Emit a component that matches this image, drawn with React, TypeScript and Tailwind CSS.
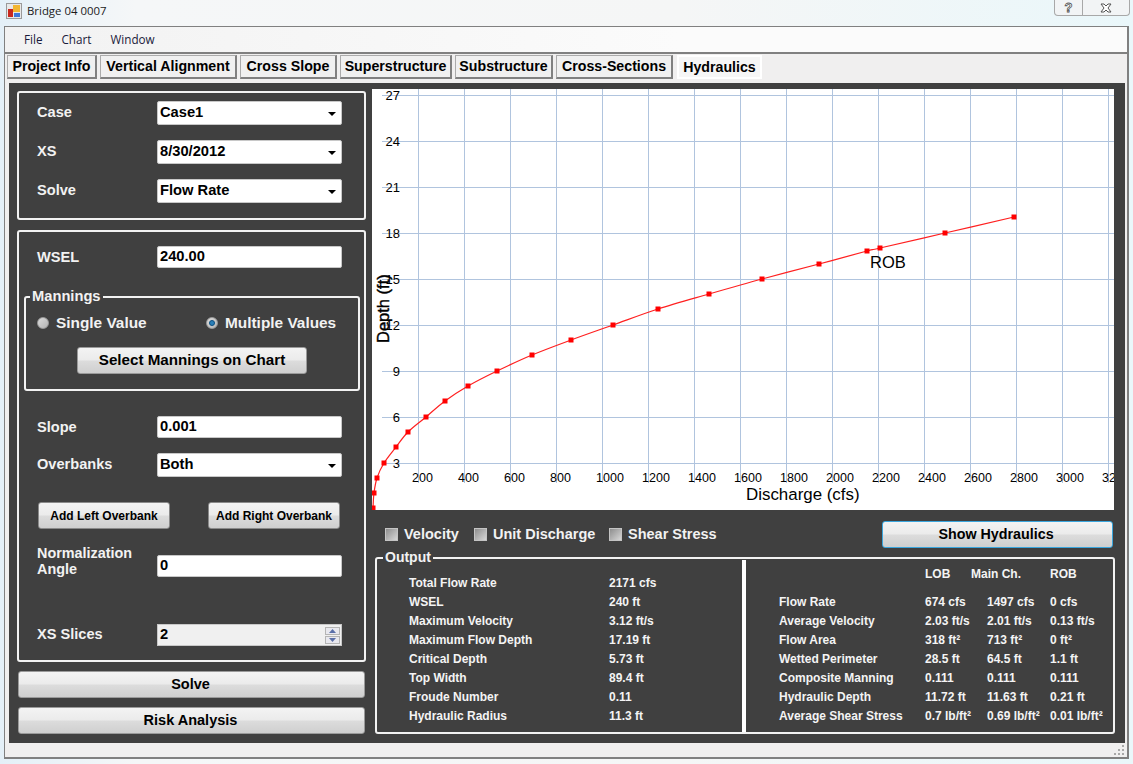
import { ReactNode } from "react";

const tabs = [
  { name: "Project Info", cls: "w-[90px]" },
  { name: "Vertical Alignment", cls: "w-[137px]" },
  { name: "Cross Slope", cls: "w-[97px]" },
  { name: "Superstructure", cls: "w-[112px]" },
  { name: "Substructure", cls: "w-[98px]" },
  { name: "Cross-Sections", cls: "w-[117px]" },
];

// chart coordinates, measured from the top left of the plot
const points = [
  [1, 419], [2, 404], [5, 389], [12, 374], [24, 358], [36, 343], [54, 328], [73, 312],
  [96, 297], [125, 282], [160, 266], [199, 251], [241, 236], [286, 220], [337, 205],
  [390, 190], [447, 175], [495, 162], [508, 159], [573, 144], [642, 128],
];

// smooth line through the points (catmull-rom to bezier)
function curve(p: number[][]) {
  let d = `M${p[0][0]} ${p[0][1]}`;
  for (let i = 0; i < p.length - 1; i++) {
    const a = p[Math.max(i - 1, 0)];
    const b = p[i];
    const c = p[i + 1];
    const e = p[Math.min(i + 2, p.length - 1)];
    d += ` C${b[0] + (c[0] - a[0]) / 6} ${b[1] + (c[1] - a[1]) / 6} ${c[0] - (e[0] - b[0]) / 6} ${c[1] - (e[1] - b[1]) / 6} ${c[0]} ${c[1]}`;
  }
  return d;
}

const xLabels = ["200", "400", "600", "800", "1000", "1200", "1400", "1600", "1800", "2000", "2200", "2400", "2600", "2800", "3000", "3200"];
const yLabels = ["27", "24", "21", "18", "15", "12", "9", "6", "3"];

const outputLeft = [
  ["Total Flow Rate", "2171 cfs"],
  ["WSEL", "240 ft"],
  ["Maximum Velocity", "3.12 ft/s"],
  ["Maximum Flow Depth", "17.19 ft"],
  ["Critical Depth", "5.73 ft"],
  ["Top Width", "89.4 ft"],
  ["Froude Number", "0.11"],
  ["Hydraulic Radius", "11.3 ft"],
];

const outputRight = [
  ["Flow Rate", "674 cfs", "1497 cfs", "0 cfs"],
  ["Average Velocity", "2.03 ft/s", "2.01 ft/s", "0.13 ft/s"],
  ["Flow Area", "318 ft²", "713 ft²", "0 ft²"],
  ["Wetted Perimeter", "28.5 ft", "64.5 ft", "1.1 ft"],
  ["Composite Manning", "0.111", "0.111", "0.111"],
  ["Hydraulic Depth", "11.72 ft", "11.63 ft", "0.21 ft"],
  ["Average Shear Stress", "0.7 lb/ft²", "0.69 lb/ft²", "0.01 lb/ft²"],
];

function Caret() {
  return (
    <svg width="8" height="4" viewBox="0 0 8 4" className="mr-[5px] mt-[2px]">
      <path d="M0 0h8L4 4z" fill="#000" />
    </svg>
  );
}

function Select({ value }: { value: string }) {
  return (
    <div className="w-[185px] h-[24px] pl-[2px] flex items-center justify-between bg-white rounded-[2px] border border-[#c8c8c8] text-black text-[14.7px] leading-none">
      <span className="pb-[1px]">{value}</span>
      <Caret />
    </div>
  );
}

function Input({ value }: { value: string }) {
  return (
    <div className="w-[185px] h-[22px] pl-[2px] pb-[1px] flex items-center bg-white rounded-[2px] border border-[#c8c8c8] text-black text-[14.7px] leading-none">
      {value}
    </div>
  );
}

function Row({ label, children, cls, labelCls }: { label: string; children: ReactNode; cls?: string; labelCls?: string }) {
  return (
    <div className={`flex items-center pl-[18px] ${cls ?? ""}`}>
      <span className={`w-[120px] text-[14.6px] leading-[16px] text-[#f2f2f2] ${labelCls ?? ""}`}>{label}</span>
      {children}
    </div>
  );
}

function Button({ children, cls }: { children: ReactNode; cls: string }) {
  return (
    <div
      className={`flex items-center justify-center rounded-[3px] border text-black bg-[linear-gradient(#f3f3f3_0%,#ebebeb_48%,#dcdcdc_52%,#cfcfcf_100%)] ${cls}`}
    >
      {children}
    </div>
  );
}

function Radio({ checked }: { checked?: boolean }) {
  return (
    <span className="w-[12px] h-[12px] rounded-full border border-[#9a9a9a] bg-[linear-gradient(135deg,#dcdcdc,#b4b4b4)] flex items-center justify-center">
      {checked && <span className="w-[6px] h-[6px] rounded-full bg-[#2a7fb8] border border-[#0d4f80]" />}
    </span>
  );
}

function Check({ label, cls }: { label: string; cls: string }) {
  return (
    <div className={`flex items-center gap-[6px] ${cls}`}>
      <span className="w-[13px] h-[13px] border border-[#c4c4c4] bg-[linear-gradient(135deg,#8e8e8e,#d6d6d6)]" />
      <span className="text-[14.5px] leading-none text-[#f2f2f2]">{label}</span>
    </div>
  );
}

function Spinner() {
  return (
    <div className="w-[15px] h-[17px] mr-[1px] flex flex-col gap-[1px]">
      <span className="flex-1 flex items-center justify-center border border-[#b4b4b4] bg-[#e8e8ee]">
        <svg width="7" height="4" viewBox="0 0 7 4"><path d="M0 4h7L3.5 0z" fill="#5a6fa8" /></svg>
      </span>
      <span className="flex-1 flex items-center justify-center border border-[#b4b4b4] bg-[#e8e8ee]">
        <svg width="7" height="4" viewBox="0 0 7 4"><path d="M0 0h7L3.5 4z" fill="#5a6fa8" /></svg>
      </span>
    </div>
  );
}

function Chart() {
  return (
    <svg width="742" height="421" className="block bg-white font-normal" style={{ fontFamily: "'Liberation Sans', sans-serif" }}>
      {xLabels.map((_, i) => (
        <line key={i} x1={46.5 + 46 * i} x2={46.5 + 46 * i} y1="0" y2="394" stroke="#b0c4de" />
      ))}
      {yLabels.map((_, i) => (
        <line key={i} x1="10" x2="742" y1={6.5 + 46 * i} y2={6.5 + 46 * i} stroke="#b0c4de" />
      ))}
      {yLabels.map((t, i) => (
        <text key={t} x="28" y={10.5 + 46 * i} textAnchor="end" fontSize="13" fill="#000">
          {t}
        </text>
      ))}
      {xLabels.map((t, i) => (
        <text key={t} x={46 + 46 * i + (t.length > 3 ? 8 : 4.5)} y="392.5" textAnchor="middle" fontSize="12.5" fill="#000">
          {t}
        </text>
      ))}
      <path d={curve(points)} fill="none" stroke="#ff2020" strokeWidth="1.2" />
      {points.map(([x, y]) => (
        <rect key={x} x={x - 2.5} y={y - 2.5} width="5" height="5" fill="#ff0000" />
      ))}
      <text x="498" y="179" fontSize="16.5" fill="#000">ROB</text>
      <text x="374" y="411" fontSize="16.9" fill="#000">Discharge (cfs)</text>
      <text
        transform="translate(17 254) rotate(-90)"
        fontSize="16.5"
        fill="#000"
        stroke="#000"
        strokeWidth="0.4"
      >
        Depth (ft)
      </text>
    </svg>
  );
}

export default function App() {
  return (
    <div className="w-[1133px] h-[764px] overflow-hidden font-['Liberation_Sans',sans-serif] font-bold bg-[linear-gradient(90deg,#e4f0f8,#f5f7f8_12%,#f5f6f6_60%,#eaf7fa)]">
      {/* title bar */}
      <div className="h-[26px] flex justify-between">
        <div className="flex items-center gap-[5px] pl-[6px] pb-[4px]">
          <svg width="16" height="16" viewBox="0 0 16 16">
            <rect x="0.5" y="0.5" width="15" height="15" fill="#e8e8e8" stroke="#9a9a9a" />
            <rect x="2" y="6" width="5" height="8" fill="#c8281e" />
            <rect x="7" y="2" width="7" height="7" fill="#f2b632" />
            <rect x="8" y="10" width="6" height="4" fill="#3f78d8" />
          </svg>
          <span className="font-['Open_Sans',sans-serif] font-normal text-[11.4px] text-[#1a1a1a]">Bridge 04 0007</span>
        </div>
        <div className="w-[76px] h-[16px] mr-[3px] flex rounded-b-[4px] border border-t-0 border-[#a8a8a8] bg-[#f2f4f5]">
          <span className="w-[28px] border-r border-[#a8a8a8] flex items-center justify-center text-[13px] leading-none text-white [-webkit-text-stroke:0.8px_#555]">
            ?
          </span>
          <span className="flex-1 flex items-center justify-center">
            <svg width="12" height="10" viewBox="0 0 12 10">
              <path d="M1 1h3l2 2 2-2h3L8 5l3 4H8L6 7 4 9H1l3-4z" fill="#fff" stroke="#555" />
            </svg>
          </span>
        </div>
      </div>

      {/* form */}
      <div className="ml-[4px] w-[1125px] h-[733px] border border-[#808080] border-b-2 border-r-2 bg-[#f0efef] flex flex-col">
        <div className="h-[25px] shrink-0 pl-[19px] flex items-center gap-[19px] bg-[linear-gradient(90deg,#f2f2f2,#fbfbfb_60%)] font-['Open_Sans',sans-serif] font-normal text-[11.7px] text-[#1a1a3a]">
          <span>File</span>
          <span>Chart</span>
          <span>Window</span>
        </div>
        <div className="h-[2px] shrink-0 bg-[#808080]" />

        <div className="h-[29px] shrink-0 pl-[2px] pt-[1px] flex gap-[3px] text-[14.2px] leading-none text-black">
          {tabs.map((t) => (
            <div
              key={t.name}
              className={`h-[24px] flex items-center justify-center bg-[#f0f0f0] border border-[#ababab] border-r-2 border-b-2 border-r-[#808080] border-b-[#808080] ${t.cls}`}
            >
              {t.name}
            </div>
          ))}
          <div className="w-[85px] h-[24px] ml-[1px] flex items-center justify-center bg-[#f6f6f6] border-2 border-white">
            Hydraulics
          </div>
        </div>

        {/* dark panel */}
        <div className="ml-[4px] w-[1116px] h-[660px] shrink-0 bg-[#404040] flex pl-[8px] pt-[6px]">
          <div className="w-[349px] shrink-0">
            <div className="h-[129px] mt-[2px] pt-[8px] border-2 border-[#f2f2f2] rounded-[3px] flex flex-col gap-[15px]">
              <Row label="Case" labelCls="pb-[2px]"><Select value="Case1" /></Row>
              <Row label="XS" labelCls="pb-[2px]"><Select value="8/30/2012" /></Row>
              <Row label="Solve" labelCls="pb-[2px]"><Select value="Flow Rate" /></Row>
            </div>

            <div className="h-[432px] mt-[10px] pt-[14px] border-2 border-[#f2f2f2] rounded-[3px]">
              <Row label="WSEL"><Input value="240.00" /></Row>

              <div className="relative w-[336px] h-[95px] ml-[5px] mt-[28px] pt-[16px] border-2 border-[#f2f2f2] rounded-[3px]">
                <span className="absolute -top-[10px] left-[4px] px-[2px] bg-[#404040] text-[14.7px] leading-[16px] text-[#f2f2f2]">
                  Mannings
                </span>
                <div className="h-[18px] pl-[11px] flex items-center text-[15.4px] leading-none text-[#f2f2f2]">
                  <Radio />
                  <span className="ml-[7px] w-[150px]">Single Value</span>
                  <Radio checked />
                  <span className="ml-[7px]">Multiple Values</span>
                </div>
                <Button cls="mx-auto mt-[15px] w-[230px] h-[27px] border-[#9a9a9a] text-[15.2px]">Select Mannings on Chart</Button>
              </div>

              <Row label="Slope" cls="mt-[25px]"><Input value="0.001" /></Row>
              <Row label="Overbanks" cls="mt-[15px]" labelCls="pb-[2px]"><Select value="Both" /></Row>

              <div className="mt-[25px] pl-[19px] flex gap-[38px]">
                <Button cls="w-[132px] h-[27px] border-[#8a8a8a] text-[12px]">Add Left Overbank</Button>
                <Button cls="w-[132px] h-[27px] border-[#8a8a8a] text-[12px]">Add Right Overbank</Button>
              </div>

              <div className="mt-[16px] pl-[18px] flex items-end">
                <span className="w-[120px] text-[14.4px] leading-[16px] text-[#f2f2f2]">
                  Normalization
                  <br />
                  Angle
                </span>
                <Input value="0" />
              </div>

              <Row label="XS Slices" cls="mt-[47px]" labelCls="pb-[2px]">
                <div className="w-[185px] h-[22px] pl-[2px] flex items-center justify-between bg-[#f0f0f0] border border-[#c8c8c8] text-black text-[14.7px] leading-none">
                  <span className="pb-[1px]">2</span>
                  <Spinner />
                </div>
              </Row>
            </div>

            <Button cls="mt-[9px] ml-[1px] pr-[2px] w-[347px] h-[27px] border-[#9a9a9a] text-[14.5px]">Solve</Button>
            <Button cls="mt-[9px] ml-[1px] pr-[2px] w-[347px] h-[27px] border-[#9a9a9a] text-[14.5px]">Risk Analysis</Button>
          </div>

          <div className="ml-[6px] w-[742px] shrink-0">
            <Chart />
            <div className="mt-[11px] h-[27px] flex items-center justify-between pr-[1px]">
              <div className="flex items-center pl-[13px]">
                <Check label="Velocity" cls="w-[89px]" />
                <Check label="Unit Discharge" cls="w-[135px]" />
                <Check label="Shear Stress" cls="" />
              </div>
              <Button cls="w-[231px] h-[27px] pr-[3px] border-[#3aa6dd] text-[14.3px]">Show Hydraulics</Button>
            </div>

            <div className="relative ml-[3px] mt-[9px] w-[740px] h-[177px] border-2 border-[#f2f2f2] rounded-[3px] flex text-[12px] leading-[19px] text-[#f4f4f4]">
              <span className="absolute -top-[10px] left-[6px] px-[2px] bg-[#404040] text-[14px] leading-[16px] text-[#f2f2f2]">
                Output
              </span>
              <div className="w-[365px] shrink-0 pl-[32px] pt-[15px]">
                {outputLeft.map(([k, v]) => (
                  <div key={k} className="flex h-[19px]">
                    <span className="w-[200px]">{k}</span>
                    <span>{v}</span>
                  </div>
                ))}
              </div>
              <div className="w-[4px] shrink-0 h-[172px] mt-[1px] bg-white" />
              <div className="flex-1 pl-[33px] pt-[6px]">
                <div className="grid grid-cols-[146px_62px_63px_1fr] h-[19px] mb-[9px]">
                  <span />
                  <span>LOB</span>
                  <span className="-ml-[16px]">Main Ch.</span>
                  <span>ROB</span>
                </div>
                {outputRight.map((r) => (
                  <div key={r[0]} className="grid grid-cols-[146px_62px_63px_1fr] h-[19px] whitespace-nowrap">
                    {r.map((c, i) => (
                      <span key={i}>{c}</span>
                    ))}
                  </div>
                ))}
              </div>
            </div>
          </div>
        </div>

        {/* status strip */}
        <div className="flex-1 flex justify-end items-end pr-[2px] pb-[1px]">
          <svg width="11" height="11" viewBox="0 0 11 11">
            <g fill="#a8a8a8">
              <rect x="8" y="0" width="2" height="2" />
              <rect x="4" y="4" width="2" height="2" />
              <rect x="8" y="4" width="2" height="2" />
              <rect x="0" y="8" width="2" height="2" />
              <rect x="4" y="8" width="2" height="2" />
              <rect x="8" y="8" width="2" height="2" />
            </g>
          </svg>
        </div>
      </div>
    </div>
  );
}
